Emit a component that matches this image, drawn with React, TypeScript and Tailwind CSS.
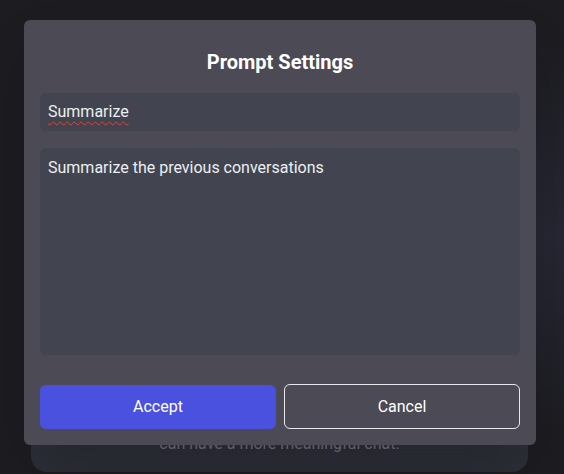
export default function App() {
  return (
    <div className="relative h-[474px] w-[564px] overflow-hidden bg-[#1c1c21] font-['Roboto',sans-serif]">
      <div className="absolute inset-0 bg-[radial-gradient(ellipse_at_right,#262733_0%,#1c1c21_60%)]" />

      {/* page content under the overlay */}
      <div className="relative flex h-full flex-col justify-end px-[31px] pb-[2px]">
        <div className="mr-[5px] flex h-[120px] items-end justify-center rounded-b-2xl bg-gradient-to-b from-[#343641] to-[#2c2e37] pb-[16px]">
          <p className="text-[16px] text-[#70737f]">can have a more meaningful chat.</p>
        </div>
      </div>

      {/* modal */}
      <div className="absolute left-[24px] top-[20px] flex h-[425px] w-[512px] flex-col rounded-md bg-[#4b4a55] px-4 pb-4 pt-[28px] shadow-2xl">
        <h2 className="text-center text-[20px] font-bold leading-7 text-white">Prompt Settings</h2>

        <div className="mt-[17px] flex h-[38px] items-center rounded-md bg-[#424550] px-2 text-[16px] text-[#eceef2]">
          <span className="underline decoration-wavy decoration-[#d9443a] decoration-1 underline-offset-[4px]">
            Summarize
          </span>
        </div>

        <div className="mt-[17px] h-[207px] rounded-md bg-[#424550] px-2 pt-[8px] text-[16px] leading-6 text-[#eceef2]">
          Summarize the previous conversations
        </div>

        <div className="mt-auto grid grid-cols-2 gap-2">
          <button className="h-[44px] rounded-md bg-[#4a51df] text-[16px] text-white">Accept</button>
          <button className="-mt-px h-[45px] rounded-md border border-[#e8e8ec] text-[16px] text-white">Cancel</button>
        </div>
      </div>
    </div>
  );
}
